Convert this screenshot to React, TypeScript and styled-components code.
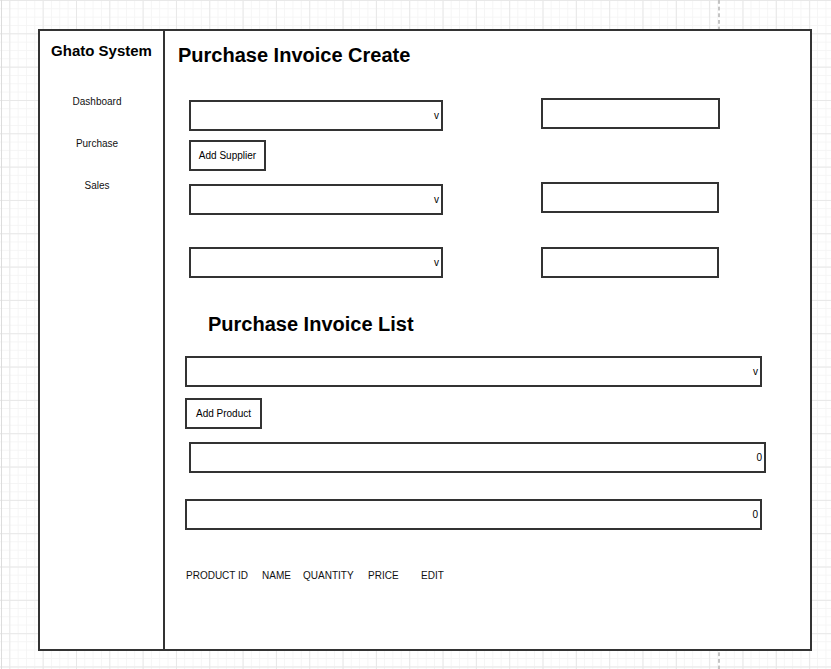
import React from "react";
import styled, { createGlobalStyle } from "styled-components";

const GlobalStyle = createGlobalStyle`
  html, body { margin: 0; padding: 0; }
  body {
    min-height: 669px;
    font-family: "Liberation Sans", Arial, sans-serif;
    color: #000;
    background-color: #fff;
    background-image:
      linear-gradient(to right, #dcdcdc 1px, transparent 1px),
      linear-gradient(to bottom, #c4c4c4 55%, transparent 55%),
      linear-gradient(to right, #e8e8e8 1px, transparent 1px),
      linear-gradient(to bottom, #e8e8e8 1px, transparent 1px),
      linear-gradient(to right, #f5f5f5 1px, transparent 1px),
      linear-gradient(to bottom, #f5f5f5 1px, transparent 1px);
    background-size: 2px 100%, 1.5px 6.667px, 33.333px 33.333px, 33.333px 33.333px, 8.333px 8.333px, 8.333px 8.333px;
    background-position: 1px 0, 718px 0, 9.333px 0, 0 0, 1px 0, 0 0;
    background-repeat: repeat-y, repeat-y, repeat, repeat, repeat, repeat;
  }
`;

const Canvas = styled.div`
  padding: 29px 0 18px 38px;
`;

const Frame = styled.div`
  box-sizing: border-box;
  width: 774px;
  height: 622px;
  border: 2px solid #333;
  background: #fff;
  display: flex;
`;

const Sidebar = styled.aside`
  box-sizing: border-box;
  width: 125px;
  flex: none;
  border-right: 2px solid #333;
  padding-top: 11px;
  display: flex;
  flex-direction: column;
`;

const Brand = styled.div`
  font-size: 15px;
  font-weight: bold;
  line-height: 17px;
  text-align: center;
`;

const Nav = styled.nav`
  margin-top: 37px;
  padding-right: 9px;
  display: flex;
  flex-direction: column;
  gap: 30px;
`;

const NavItem = styled.div`
  font-size: 10px;
  line-height: 12px;
  text-align: center;
  color: #111;
`;

const Main = styled.main`
  flex: 1;
  padding-top: 13px;
  display: flex;
  flex-direction: column;
  align-items: flex-start;
`;

const Heading = styled.h1<{ $mt?: number; $ml: number }>`
  margin: ${(p) => p.$mt ?? 0}px 0 0 ${(p) => p.$ml}px;
  font-size: 20px;
  font-weight: bold;
  line-height: 23px;
`;

const FormRow = styled.div<{ $mt: number }>`
  display: flex;
  align-items: flex-start;
  margin: ${(p) => p.$mt}px 0 0 24px;
`;

const Box = styled.div<{ $w: number; $mt?: number; $ml?: number }>`
  box-sizing: border-box;
  width: ${(p) => p.$w}px;
  height: 31px;
  margin: ${(p) => p.$mt ?? 0}px 0 0 ${(p) => p.$ml ?? 0}px;
  border: 2px solid #333;
  background: #fff;
  display: flex;
  align-items: center;
  justify-content: flex-end;
  padding-right: 2px;
  font-size: 10px;
  line-height: 12px;
`;

const Button = styled.button<{ $mt: number; $ml: number }>`
  box-sizing: border-box;
  width: 77px;
  height: 31px;
  margin: ${(p) => p.$mt}px 0 0 ${(p) => p.$ml}px;
  padding: 0;
  border: 2px solid #333;
  background: #fff;
  font-family: inherit;
  font-size: 10px;
  color: #000;
`;

const TableHead = styled.div`
  margin: 40px 0 0 21px;
  display: grid;
  grid-template-columns: 76px 41px 65px 53px auto;
  font-size: 10px;
  line-height: 12px;
  color: #111;
`;

export default function App() {
  return (
    <>
      <GlobalStyle />
      <Canvas>
        <Frame>
          <Sidebar>
            <Brand>Ghato System</Brand>
            <Nav>
              <NavItem>Dashboard</NavItem>
              <NavItem>Purchase</NavItem>
              <NavItem>Sales</NavItem>
            </Nav>
          </Sidebar>
          <Main>
            <Heading $ml={13}>Purchase Invoice Create</Heading>
            <FormRow $mt={31}>
              <Box $w={254} $mt={2}>v</Box>
              <Box $w={179} $ml={98} />
            </FormRow>
            <Button $mt={9} $ml={24}>Add Supplier</Button>
            <FormRow $mt={11}>
              <Box $w={254} $mt={2}>v</Box>
              <Box $w={178} $ml={98} />
            </FormRow>
            <FormRow $mt={32}>
              <Box $w={254}>v</Box>
              <Box $w={178} $ml={98} />
            </FormRow>
            <Heading $mt={35} $ml={43}>Purchase Invoice List</Heading>
            <Box $w={577} $mt={20} $ml={20}>v</Box>
            <Button $mt={11} $ml={20}>Add Product</Button>
            <Box $w={577} $mt={13} $ml={24}>0</Box>
            <Box $w={577} $mt={26} $ml={20}>0</Box>
            <TableHead>
              <span>PRODUCT ID</span>
              <span>NAME</span>
              <span>QUANTITY</span>
              <span>PRICE</span>
              <span>EDIT</span>
            </TableHead>
          </Main>
        </Frame>
      </Canvas>
    </>
  );
}
